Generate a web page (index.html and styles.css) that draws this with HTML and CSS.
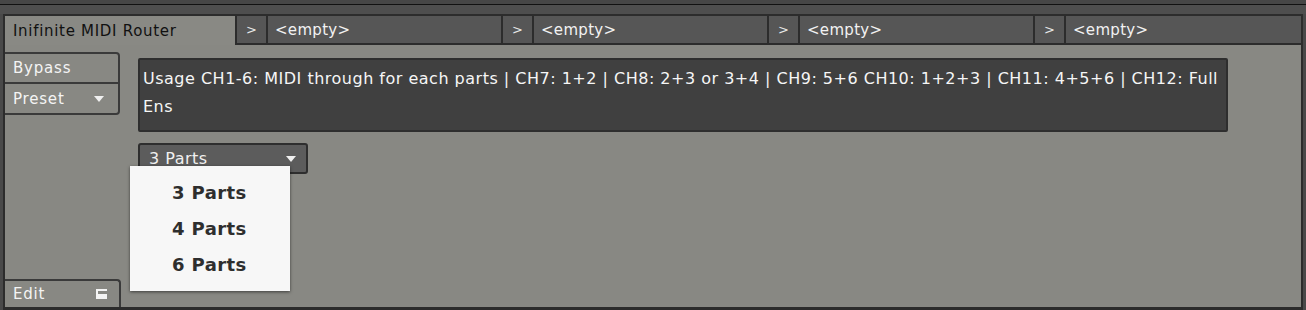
FILE: index.html
```html
<!DOCTYPE html>
<html>
<head>
<meta charset="utf-8">
<link rel="stylesheet" href="styles.css">
</head>
<body>
<div class="app">
  <div class="topbar"></div>
  <div class="tabs">
    <div class="tab active">Inifinite MIDI Router</div>
    <div class="arrow">&gt;</div>
    <div class="tab slot">&lt;empty&gt;</div>
    <div class="arrow">&gt;</div>
    <div class="tab slot">&lt;empty&gt;</div>
    <div class="arrow">&gt;</div>
    <div class="tab slot">&lt;empty&gt;</div>
    <div class="arrow">&gt;</div>
    <div class="tab slot">&lt;empty&gt;</div>
  </div>
  <div class="main">
    <div class="side">
      <div class="sidegroup">
        <div class="sbtn bypass">Bypass</div>
        <div class="sbtn preset">Preset <span class="tri"></span></div>
      </div>
      <div class="sbtn edit">Edit <span class="editicon"></span></div>
    </div>
    <div class="content">
      <div class="usage">Usage CH1-6: MIDI through for each parts | CH7: 1+2 | CH8: 2+3 or 3+4 | CH9: 5+6 CH10: 1+2+3 | CH11: 4+5+6 | CH12: Full Ens</div>
      <div class="dropwrap">
        <div class="drop">3 Parts <span class="tri"></span></div>
        <ul class="menu">
          <li>3 Parts</li>
          <li>4 Parts</li>
          <li>6 Parts</li>
        </ul>
      </div>
    </div>
  </div>
</div>
</body>
</html>
```

FILE: styles.css
```css
* { box-sizing: border-box; }
html, body { margin: 0; padding: 0; }
body {
  width: 1306px;
  height: 310px;
  background: #494949;
  font-family: "DejaVu Sans", "Liberation Sans", sans-serif;
  overflow: hidden;
}
.app { display: flex; flex-direction: column; height: 310px; }
.topbar {
  height: 14px;
  background: #4e4e4e;
  border-top: 4px solid #464646;
  box-shadow: inset 0 1px 0 #111;
}
.tabs {
  display: flex;
  height: 31px;
  margin: 0 3px;
  border-top: 2px solid #2c2c2c;
}
.tab, .arrow {
  display: flex;
  align-items: center;
  font-size: 15px;
  height: 100%;
}
.tab.active {
  width: 234px;
  background: #898984;
  color: #111;
  padding-left: 8px;
  border-left: 2px solid #2c2c2c;
  border-right: 2px solid #2c2c2c;
  letter-spacing: 0.7px;
}
.arrow {
  width: 31px;
  background: #565656;
  color: #e8e8e8;
  justify-content: center;
  border-right: 2px solid #2c2c2c;
  border-bottom: 2px solid #2c2c2c;
  font-size: 13px;
}
.tab.slot {
  width: 235px;
  background: #565656;
  color: #f2f2f2;
  padding-left: 7px;
  border-right: 2px solid #2c2c2c;
  border-bottom: 2px solid #2c2c2c;
  letter-spacing: 0.3px;
}
.tab.slot:last-child { flex: 1; }
.main {
  flex: 1;
  margin: 0 3px 0 3px;
  background: #888883;
  border-left: 2px solid #2c2c2c;
  border-right: 2px solid #2c2c2c;
  border-bottom: 3px solid #2c2c2c;
  display: flex;
}
.side {
  width: 118px;
  display: flex;
  flex-direction: column;
  justify-content: space-between;
  padding-top: 7px;
}
.sidegroup {
  border: 2px solid #3a3a3a;
  border-left: none;
  border-radius: 0 4px 4px 0;
  width: 115px;
}
.sbtn {
  display: flex;
  align-items: center;
  justify-content: space-between;
  color: #f4f4f4;
  font-size: 15px;
  letter-spacing: 0.8px;
  padding: 0 14px 0 8px;
  height: 29px;
}
.sbtn.bypass { border-bottom: 2px solid #3a3a3a; height: 30px; }
.sbtn.edit {
  width: 116px;
  height: 28px;
  border-top: 2px solid #3a3a3a;
  border-right: 2px solid #3a3a3a;
  border-radius: 0 4px 0 0;
  padding-right: 12px;
}
.tri {
  width: 0; height: 0;
  border-left: 5px solid transparent;
  border-right: 5px solid transparent;
  border-top: 6px solid #f0f0f0;
}
.editicon {
  width: 11px; height: 10px;
  border: 2px solid #f4f4f4;
  border-right-width: 0;
  border-top-width: 2px;
  background: linear-gradient(#888883 0 3px, #f4f4f4 3px);
}
.content {
  flex: 1;
  padding: 13px 0 0 15px;
}
.usage {
  width: 1090px;
  height: 74px;
  background: #404040;
  border: 2px solid #2e2e2e;
  border-radius: 2px;
  color: #f6f6f6;
  font-size: 16px;
  letter-spacing: 0.5px;
  line-height: 28px;
  padding: 5px 8px 0 3px;
}
.dropwrap {
  position: relative;
  margin-top: 11px;
}
.drop {
  width: 170px;
  height: 31px;
  background: #5c5c5c;
  border: 2px solid #2e2e2e;
  border-radius: 3px;
  color: #f0f0f0;
  font-size: 16px;
  letter-spacing: 0.5px;
  display: flex;
  align-items: center;
  justify-content: space-between;
  padding: 0 10px 0 9px;
}
.menu {
  position: absolute;
  left: -8px;
  top: 23px;
  width: 160px;
  margin: 0;
  padding: 9px 0 8px;
  list-style: none;
  background: #f7f7f7;
  box-shadow: 0 1px 3px rgba(0,0,0,0.55);
}
.menu li {
  font-family: "DejaVu Sans", sans-serif;
  font-weight: bold;
  font-size: 18px;
  letter-spacing: 0.4px;
  color: #2e2e2e;
  height: 36px;
  line-height: 36px;
  padding-left: 42px;
}
```
